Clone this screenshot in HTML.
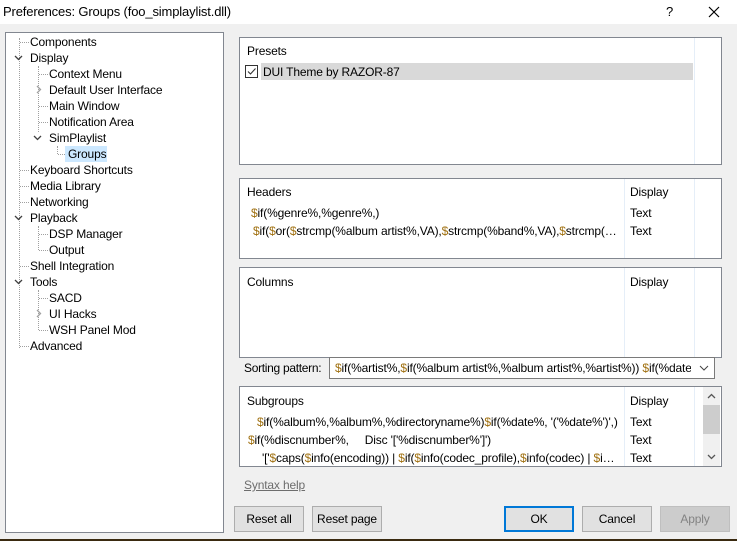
<!DOCTYPE html>
<html><head><meta charset="utf-8"><style>
*{margin:0;padding:0;box-sizing:border-box}
body{width:737px;height:541px;background:#f0f0f0;font-family:"Liberation Sans",sans-serif;font-size:12px;letter-spacing:-0.15px;color:#000;position:relative;overflow:hidden}
.a{position:absolute;white-space:nowrap}
.box{position:absolute;background:#fff;border:1px solid #828790}
.btn{position:absolute;height:26px;background:#e1e1e1;border:1px solid #adadad;text-align:center;line-height:24px}
.vd{position:absolute;border-left:1px dotted #a0a0a0;width:0}
.hd{position:absolute;border-top:1px dotted #a0a0a0;height:0}
.col{position:absolute;top:0;bottom:0;border-left:1px solid #e5eef8}
.d{color:#a07010}
</style></head><body>
<div class="a" style="left:0;top:0;width:737px;height:24px;background:#fff"></div>
<div class="a" style="left:3px;top:4px;font-size:13px">Preferences: Groups (foo_simplaylist.dll)</div>
<div class="a" style="left:666px;top:4px;font-size:13px">?</div>
<svg class="a" style="left:708px;top:6px" width="12" height="12"><path d="M1 1L11 11M11 1L1 11" stroke="#000" stroke-width="1.2"/></svg>

<div class="box" style="left:5px;top:32px;width:219px;height:501px">
</div>
<div class="vd" style="left:19px;top:38px;height:310px"></div>
<div class="vd" style="left:38px;top:66px;height:66px"></div>
<div class="vd" style="left:57px;top:146px;height:8px"></div>
<div class="vd" style="left:38px;top:226px;height:24px"></div>
<div class="vd" style="left:38px;top:290px;height:40px"></div>
<div class="hd" style="left:20px;top:42px;width:9px"></div>
<div class="hd" style="left:20px;top:170px;width:9px"></div>
<div class="hd" style="left:20px;top:186px;width:9px"></div>
<div class="hd" style="left:20px;top:202px;width:9px"></div>
<div class="hd" style="left:20px;top:266px;width:9px"></div>
<div class="hd" style="left:20px;top:346px;width:9px"></div>
<div class="hd" style="left:39px;top:74px;width:9px"></div>
<div class="hd" style="left:39px;top:106px;width:9px"></div>
<div class="hd" style="left:39px;top:122px;width:9px"></div>
<div class="hd" style="left:58px;top:154px;width:9px"></div>
<div class="hd" style="left:39px;top:234px;width:9px"></div>
<div class="hd" style="left:39px;top:250px;width:9px"></div>
<div class="hd" style="left:39px;top:298px;width:9px"></div>
<div class="hd" style="left:39px;top:330px;width:9px"></div>
<svg class="a" style="left:14px;top:54px" width="10" height="8"><path d="M1 2L4.5 5.5L8 2" stroke="#404040" fill="none" stroke-width="1.3"/></svg>
<svg class="a" style="left:14px;top:214px" width="10" height="8"><path d="M1 2L4.5 5.5L8 2" stroke="#404040" fill="none" stroke-width="1.3"/></svg>
<svg class="a" style="left:14px;top:278px" width="10" height="8"><path d="M1 2L4.5 5.5L8 2" stroke="#404040" fill="none" stroke-width="1.3"/></svg>
<svg class="a" style="left:33px;top:134px" width="10" height="8"><path d="M1 2L4.5 5.5L8 2" stroke="#404040" fill="none" stroke-width="1.3"/></svg>
<svg class="a" style="left:35px;top:85px" width="8" height="10"><path d="M2 1L5.5 4.5L2 8" stroke="#a0a0a0" fill="none" stroke-width="1.3"/></svg>
<svg class="a" style="left:35px;top:309px" width="8" height="10"><path d="M2 1L5.5 4.5L2 8" stroke="#a0a0a0" fill="none" stroke-width="1.3"/></svg>
<div class="a" style="left:30px;top:35px">Components</div>
<div class="a" style="left:30px;top:51px">Display</div>
<div class="a" style="left:49px;top:67px">Context Menu</div>
<div class="a" style="left:49px;top:83px">Default User Interface</div>
<div class="a" style="left:49px;top:99px">Main Window</div>
<div class="a" style="left:49px;top:115px">Notification Area</div>
<div class="a" style="left:49px;top:131px">SimPlaylist</div>
<div class="a" style="left:65px;top:146px;width:42px;height:16px;background:#cce8ff"></div>
<div class="a" style="left:68px;top:147px">Groups</div>
<div class="a" style="left:30px;top:163px">Keyboard Shortcuts</div>
<div class="a" style="left:30px;top:179px">Media Library</div>
<div class="a" style="left:30px;top:195px">Networking</div>
<div class="a" style="left:30px;top:211px">Playback</div>
<div class="a" style="left:49px;top:227px">DSP Manager</div>
<div class="a" style="left:49px;top:243px">Output</div>
<div class="a" style="left:30px;top:259px">Shell Integration</div>
<div class="a" style="left:30px;top:275px">Tools</div>
<div class="a" style="left:49px;top:291px">SACD</div>
<div class="a" style="left:49px;top:307px">UI Hacks</div>
<div class="a" style="left:49px;top:323px">WSH Panel Mod</div>
<div class="a" style="left:30px;top:339px">Advanced</div>

<div class="box" style="left:239px;top:37px;width:483px;height:128px">
 <div class="col" style="left:454px"></div>
 <div class="a" style="left:7px;top:6px">Presets</div>
 <div class="a" style="left:21px;top:25px;width:432px;height:17px;background:#d9d9d9"></div>
 <div class="a" style="left:5px;top:27px;width:13px;height:13px;border:1px solid #333;background:#fff"></div>
 <svg class="a" style="left:6px;top:28px" width="11" height="11"><path d="M2 5.5L4.5 8L9.5 2.5" stroke="#333" fill="none" stroke-width="1.1"/></svg>
 <div class="a" style="left:23px;top:27px">DUI Theme by RAZOR-87</div>
</div>

<div class="box" style="left:239px;top:178px;width:483px;height:81px">
 <div class="col" style="left:384px"></div><div class="col" style="left:454px"></div>
 <div class="a" style="left:7px;top:6px">Headers</div>
 <div class="a" style="left:390px;top:6px">Display</div>
 <div class="a" style="left:11px;top:27px"><span class="d">$</span>if(%genre%,%genre%,)</div>
 <div class="a" style="left:13px;top:45px;width:368px;overflow:hidden;text-overflow:ellipsis"><span class="d">$</span>if(<span class="d">$</span>or(<span class="d">$</span>strcmp(%album artist%,VA),<span class="d">$</span>strcmp(%band%,VA),<span class="d">$</span>strcmp(%va%,VA)))</div>
 <div class="a" style="left:390px;top:27px">Text</div>
 <div class="a" style="left:390px;top:45px">Text</div>
</div>

<div class="box" style="left:239px;top:267px;width:483px;height:91px">
 <div class="col" style="left:384px"></div><div class="col" style="left:454px"></div>
 <div class="a" style="left:7px;top:7px">Columns</div>
 <div class="a" style="left:390px;top:7px">Display</div>
</div>

<div class="a" style="left:244px;top:361px;letter-spacing:-0.3px">Sorting pattern:</div>
<div class="a" style="left:329px;top:357px;width:386px;height:22px;background:#fff;border:1px solid #7a7a7a;overflow:hidden">
 <div class="a" style="left:5px;top:3px;width:356px;overflow:hidden"><span class="d">$</span>if(%artist%,<span class="d">$</span>if(%album artist%,%album artist%,%artist%)) <span class="d">$</span>if(%date%,%date%)</div>
 <svg class="a" style="left:369px;top:7px" width="10" height="7"><path d="M1 1L5 5L9 1" stroke="#444" fill="none" stroke-width="1"/></svg>
</div>

<div class="box" style="left:239px;top:386px;width:483px;height:81px">
 <div class="col" style="left:384px"></div><div class="col" style="left:454px"></div>
 <div class="a" style="left:7px;top:7px">Subgroups</div>
 <div class="a" style="left:390px;top:7px">Display</div>
 <div class="a" style="left:17px;top:28px"><span class="d">$</span>if(%album%,%album%,%directoryname%)<span class="d">$</span>if(%date%, '('%date%')',)</div>
 <div class="a" style="left:8px;top:46px"><span class="d">$</span>if(%discnumber%,&nbsp;&nbsp;&nbsp;&nbsp; Disc '['%discnumber%']')</div>
 <div class="a" style="left:22px;top:64px;width:358px;overflow:hidden;text-overflow:ellipsis">'['<span class="d">$</span>caps(<span class="d">$</span>info(encoding)) | <span class="d">$</span>if(<span class="d">$</span>info(codec_profile),<span class="d">$</span>info(codec) | <span class="d">$</span>info(codec_profile))</div>
 <div class="a" style="left:390px;top:28px">Text</div>
 <div class="a" style="left:390px;top:46px">Text</div>
 <div class="a" style="left:390px;top:64px">Text</div>
 <div class="a" style="left:463px;top:0;width:17px;height:79px;background:#f0f0f0"></div>
 <div class="a" style="left:463px;top:18px;width:17px;height:29px;background:#cdcdcd"></div>
 <svg class="a" style="left:467px;top:6px" width="9" height="6"><path d="M1 5L4.5 1.5L8 5" stroke="#555" fill="none" stroke-width="1.3"/></svg>
 <svg class="a" style="left:467px;top:67px" width="9" height="6"><path d="M1 1L4.5 4.5L8 1" stroke="#555" fill="none" stroke-width="1.3"/></svg>
</div>

<div class="a" style="left:244px;top:478px;color:#6d6d6d;text-decoration:underline">Syntax help</div>

<div class="btn" style="left:234px;top:506px;width:70px">Reset all</div>
<div class="btn" style="left:312px;top:506px;width:70px">Reset page</div>
<div class="btn" style="left:504px;top:506px;width:70px;border:2px solid #0078d7;line-height:22px">OK</div>
<div class="btn" style="left:582px;top:506px;width:70px">Cancel</div>
<div class="btn" style="left:660px;top:506px;width:70px;background:#cccccc;border-color:#bfbfbf;color:#838383">Apply</div>
<div class="a" style="left:0;top:539px;width:737px;height:2px;background:#3a2a10"></div>
</body></html>
